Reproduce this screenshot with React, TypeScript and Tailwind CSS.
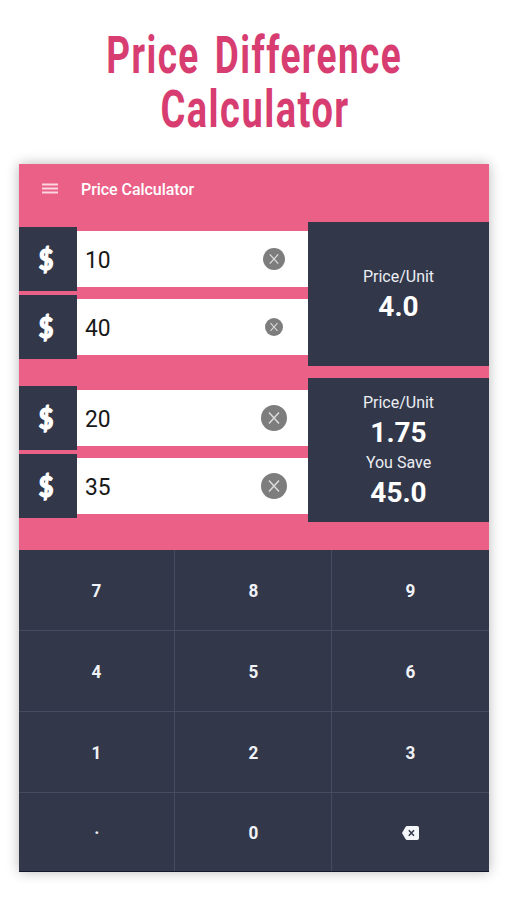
import type { ReactNode } from 'react';

const KEYS = ['7', '8', '9', '4', '5', '6', '1', '2', '3', '·', '0', 'del'];

function ClearIcon({ size }: { size: number }) {
  return (
    <svg width={size} height={size} viewBox="0 0 26 26" aria-hidden="true">
      <circle cx="13" cy="13" r="13" fill="#7d7d7d" />
      <path d="M8 7.5l10 11M18 7.5L8 18.5" stroke="#dcdcdc" strokeWidth="1.5" fill="none" />
    </svg>
  );
}

function BackspaceIcon() {
  return (
    <svg width="17" height="14" viewBox="0 0 17 14" aria-hidden="true">
      <path d="M5.2 0H15.2Q17 0 17 1.8V12.2Q17 14 15.2 14H5.2Q4.1 14 3.5 13.1L0 7L3.5 .9Q4.1 0 5.2 0Z" fill="#f5f6fa" />
      <path d="M6.8 4.3l5.2 5.4M12 4.3L6.8 9.7" stroke="#2f3647" strokeWidth="1.5" fill="none" />
    </svg>
  );
}

function PriceRow({ value, iconSize }: { value: string; iconSize: number }) {
  return (
    <div className="flex h-16 items-center">
      <div className="flex h-16 w-[58px] items-center justify-center bg-[#32384a] pr-[3px] font-[Lato] text-[28px] font-black text-white [-webkit-text-stroke:1.2px_white]">
        <span className="scale-x-90">$</span>
      </div>
      <div className="flex h-14 flex-1 items-center justify-between bg-white pl-2 text-2xl text-[#181818]">
        <span className="origin-left scale-x-95 pt-0.5">{value}</span>
        <span className="flex w-17 justify-center">
          <ClearIcon size={iconSize} />
        </span>
      </div>
    </div>
  );
}

function Panel({ children }: { children: ReactNode }) {
  return (
    <div className="flex h-36 flex-col items-center justify-center bg-[#32384a] pt-0.5 text-white">
      {children}
    </div>
  );
}

function Stat({ label, value }: { label: string; value: string }) {
  return (
    <div className="flex h-15 flex-col items-center">
      <span className="h-6 text-base leading-6 text-[#eceef4]">{label}</span>
      <span className="text-[28px] leading-9 font-bold">{value}</span>
    </div>
  );
}

export default function App() {
  return (
    <div className="h-[900px] w-[506px] overflow-hidden bg-white font-[Roboto,sans-serif]">
      <h1 className="flex h-[164px] flex-col items-center pt-[29px] text-[51px] leading-[54px] font-bold tracking-[2px] whitespace-nowrap text-[#d73d70]">
        <span className="translate-x-px scale-x-[0.725] [word-spacing:6px]">Price Difference</span>
        <span className="translate-x-0.5 scale-x-[0.745]">Calculator</span>
      </h1>

      <main className="ml-[19px] flex h-[708px] w-[470px] flex-col bg-[#eb6087] shadow-[0_0_12px_rgba(0,0,0,0.28)]">
        <header className="flex h-[58px] items-start pt-[15px] pl-[23px] text-white">
          <svg width="16" height="12" viewBox="0 0 16 12" className="mt-1" aria-hidden="true">
            <path d="M0 1.5h16M0 5.5h16M0 9.5h16" stroke="#fbd6e1" strokeWidth="1.8" />
          </svg>
          <span className="ml-[23px] text-base leading-[22px] font-medium tracking-[-0.05px]">Price Calculator</span>
        </header>

        <div className="flex h-[328px]">
          <div className="flex w-[289px] flex-col pt-[5px]">
            <div className="flex flex-col gap-1">
              <PriceRow value="10" iconSize={22} />
              <PriceRow value="40" iconSize={18} />
            </div>
            <div className="mt-[27px] flex flex-col gap-1">
              <PriceRow value="20" iconSize={26} />
              <PriceRow value="35" iconSize={26} />
            </div>
          </div>
          <div className="flex w-[181px] flex-col gap-3">
            <Panel>
              <Stat label="Price/Unit" value="4.0" />
            </Panel>
            <Panel>
              <Stat label="Price/Unit" value="1.75" />
              <Stat label="You Save" value="45.0" />
            </Panel>
          </div>
        </div>

        <div className="grid h-[322px] grid-cols-[155px_156px_157px] grid-rows-[80px_80px_80px_78px] gap-px border-b border-[#12172d] bg-[#454c60]">
          {KEYS.map((key) => (
            <button key={key} className="flex items-center justify-center bg-[#32384a] pt-0.5 text-[19px] font-bold text-[#f0f2f8]">
              {key === 'del' ? <BackspaceIcon /> : <span className="scale-x-90">{key}</span>}
            </button>
          ))}
        </div>
      </main>
    </div>
  );
}
